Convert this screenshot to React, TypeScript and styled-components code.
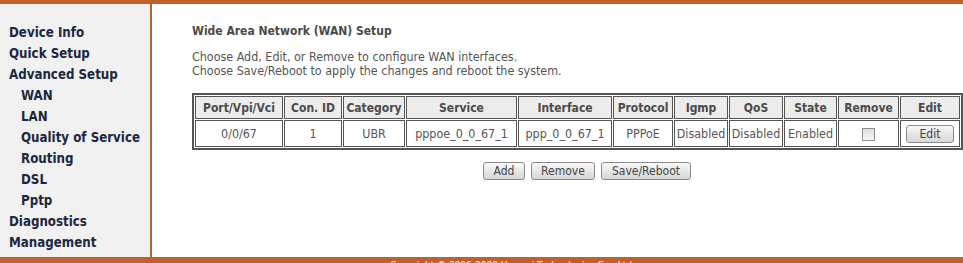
import React from "react";
import styled, { createGlobalStyle } from "styled-components";

const orange = "#c0602a";
const font = `"DejaVu Sans Condensed", "DejaVu Sans", Tahoma, sans-serif`;

const GlobalStyle = createGlobalStyle`
  html, body {
    margin: 0;
    padding: 0;
    background: #ffffff;
    overflow: hidden;
  }
  body {
    font-family: ${font};
  }
`;

type MenuItem = { label: string; sub?: boolean };

const menu: MenuItem[] = [
  { label: "Device Info" },
  { label: "Quick Setup" },
  { label: "Advanced Setup" },
  { label: "WAN", sub: true },
  { label: "LAN", sub: true },
  { label: "Quality of Service", sub: true },
  { label: "Routing", sub: true },
  { label: "DSL", sub: true },
  { label: "Pptp", sub: true },
  { label: "Diagnostics" },
  { label: "Management" },
];

const headers = [
  "Port/Vpi/Vci",
  "Con. ID",
  "Category",
  "Service",
  "Interface",
  "Protocol",
  "Igmp",
  "QoS",
  "State",
  "Remove",
  "Edit",
];

const widths = [88, 58, 62, 111, 94, 60, 54, 54, 53, 61, 60];

const row = [
  "0/0/67",
  "1",
  "UBR",
  "pppoe_0_0_67_1",
  "ppp_0_0_67_1",
  "PPPoE",
  "Disabled",
  "Disabled",
  "Enabled",
];

export default () => {
  return (
    <>
      <GlobalStyle />
      <Page>
        <TopBar />
        <Body>
          <Sidebar>
            {menu.map((m) => (
              <MenuLink key={m.label} $sub={m.sub}>
                {m.label}
              </MenuLink>
            ))}
          </Sidebar>
          <Content>
            <Title>Wide Area Network (WAN) Setup</Title>
            <Desc>
              Choose Add, Edit, or Remove to configure WAN interfaces.
              <br />
              Choose Save/Reboot to apply the changes and reboot the system.
            </Desc>
            <Table>
              <colgroup>
                {widths.map((w, i) => (
                  <col key={i} style={{ width: w }} />
                ))}
              </colgroup>
              <thead>
                <tr>
                  {headers.map((h) => (
                    <Th key={h}>{h}</Th>
                  ))}
                </tr>
              </thead>
              <tbody>
                <tr>
                  {row.map((c, i) => (
                    <Td key={i}>{c}</Td>
                  ))}
                  <Td>
                    <CheckBox />
                  </Td>
                  <Td>
                    <Button $w={48}>Edit</Button>
                  </Td>
                </tr>
              </tbody>
            </Table>
            <Actions>
              <Button $w={42}>Add</Button>
              <Button $w={64}>Remove</Button>
              <Button $w={90}>Save/Reboot</Button>
            </Actions>
          </Content>
        </Body>
        <Footer>Copyright © 2006-2009 Huawei Technologies Co., Ltd.</Footer>
      </Page>
    </>
  );
};

const Page = styled.div`
  width: 963px;
  height: 263px;
  display: flex;
  flex-direction: column;
  overflow: hidden;
`;

const TopBar = styled.div`
  height: 4px;
  background: ${orange};
  flex: none;
`;

const Body = styled.div`
  display: flex;
  height: 253px;
  flex: none;
`;

const Sidebar = styled.div`
  width: 153px;
  background: #f1f1f1;
  border-right: 2px solid ${orange};
  padding: 18px 0 0 0;
  box-sizing: border-box;
  display: flex;
  flex-direction: column;
`;

const MenuLink = styled.div<{ $sub?: boolean }>`
  font-size: 13.2px;
  font-weight: bold;
  color: #1c2740;
  height: 21px;
  line-height: 21px;
  padding-left: ${(p) => (p.$sub ? 21 : 9)}px;
  white-space: nowrap;
`;

const Content = styled.div`
  flex: 1;
  padding: 19px 0 0 40px;
  color: #555;
`;

const Title = styled.div`
  font-size: 12px;
  font-weight: bold;
  color: #4a4a4a;
  line-height: 16px;
`;

const Desc = styled.div`
  font-size: 12.4px;
  line-height: 14px;
  color: #555;
  margin-top: 11px;
`;

const Table = styled.table`
  margin-top: 15px;
  border: 2px solid #555;
  border-spacing: 1px;
  table-layout: fixed;
  width: 755px;
  background: #fff;
`;

const Th = styled.th`
  font-size: 12px;
  font-weight: bold;
  color: #4a4a4a;
  background: #ececec;
  border: 1px solid #555;
  height: 21px;
  padding: 0;
  text-align: center;
  white-space: nowrap;
`;

const Td = styled.td`
  font-size: 12.4px;
  color: #555;
  border: 1px solid #555;
  height: 25px;
  padding: 0;
  text-align: center;
  white-space: nowrap;
`;

const CheckBox = styled.span`
  display: inline-block;
  width: 11px;
  height: 11px;
  border: 1px solid #8f8f8f;
  background: linear-gradient(#dcdcdc, #f8f8f8);
  vertical-align: middle;
`;

const Actions = styled.div`
  display: flex;
  gap: 6px;
  margin: 12px 0 0 291px;
`;

const Button = styled.button<{ $w: number }>`
  width: ${(p) => p.$w}px;
  height: 18px;
  padding: 0;
  font-family: ${font};
  font-size: 12px;
  color: #444;
  border: 1px solid #8a8a8a;
  border-radius: 3px;
  background: linear-gradient(#fafafa, #e4e4e4 55%, #d8d8d8);
  line-height: 16px;
  vertical-align: middle;
`;

const Footer = styled.div`
  flex: none;
  height: 20px;
  background: ${orange};
  color: #fff;
  font-size: 10px;
  text-align: center;
  padding: 3px 0 0 62px;
  box-sizing: border-box;
`;
